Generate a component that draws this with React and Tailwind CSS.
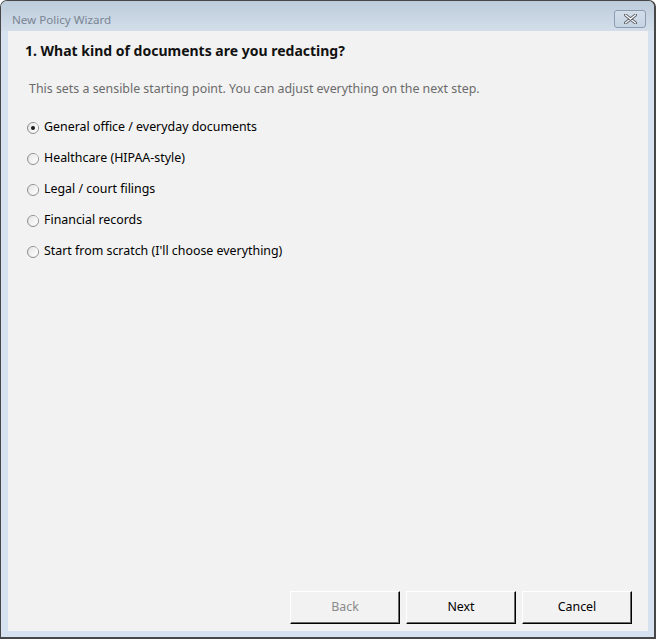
import React, { useState } from 'react';

const options = [
    'General office / everyday documents',
    'Healthcare (HIPAA-style)',
    'Legal / court filings',
    'Financial records',
    "Start from scratch (I'll choose everything)",
];

const Radio = ({ checked }) => (
    <span className="relative flex h-[12px] w-[12px] shrink-0 items-center justify-center rounded-full border border-[#8e8f8f] bg-gradient-to-br from-[#dcdcdc] to-white">
        <span className="h-[9px] w-[9px] rounded-full bg-gradient-to-br from-[#e6e6e6] to-white flex items-center justify-center">
            {checked && <span className="h-[4px] w-[4px] rounded-full bg-[#1a1a1a]"></span>}
        </span>
    </span>
);

const WinButton = ({ children, disabled, onClick }) => (
    <button
        onClick={onClick}
        className={`h-[33px] w-[110px] border border-t-white border-l-white border-r-black border-b-black bg-[#f2f2f2] shadow-[inset_-1px_-1px_0_#6b6b6b] text-[12.4px] ${disabled ? 'text-[#8a8a8a]' : 'text-black'}`}
    >
        {children}
    </button>
);

const App = () => {
    const [selected, setSelected] = useState(0);

    return (
        <div className="h-[639px] w-[656px] font-['Noto_Sans',sans-serif]">
            <div className="flex h-full w-full flex-col rounded-t-[7px] border-t border-l border-r-2 border-b-2 border-[#474747] bg-[#d6e2f0]">
                {/* title bar */}
                <div className="flex h-[30px] items-center justify-between rounded-t-[6px] bg-gradient-to-b from-[#bccbdb] to-[#d3deea] pl-[11px] pr-[8px] pt-[8px]">
                    <span className="text-[11.6px] text-[#7a8593]">New Policy Wizard</span>
                    <button className="flex h-[18px] w-[32px] items-center justify-center rounded-[3px] border border-[#8c9cb0] bg-gradient-to-b from-[#d3deea] to-[#c5d3e2] mt-[-2px]">
                        <svg width="13" height="10" viewBox="0 0 13 10">
                            <path d="M1.5 1 L11.5 9 M11.5 1 L1.5 9" stroke="#5a5f66" strokeWidth="3" strokeLinecap="round" />
                            <path d="M1.5 1 L11.5 9 M11.5 1 L1.5 9" stroke="#ffffff" strokeWidth="1.2" strokeLinecap="round" />
                        </svg>
                    </button>
                </div>

                {/* client area */}
                <div className="mb-[6px] ml-[7px] mr-[6px] flex flex-1 flex-col bg-[#f2f2f2]">
                    <div className="pl-[17px] pt-[10px]">
                        <h1 className="text-[14px] font-bold leading-[20px] text-[#111]">
                            1. What kind of documents are you redacting?
                        </h1>
                        <p className="mt-[19px] pl-[4px] text-[12.4px] leading-[18px] text-[#6b6b6b]">
                            This sets a sensible starting point. You can adjust everything on the next step.
                        </p>
                        <div className="mt-[14px] flex flex-col">
                            {options.map((opt, i) => (
                                <label
                                    key={opt}
                                    onClick={() => setSelected(i)}
                                    className="flex h-[31px] cursor-default items-center gap-[5px] pl-[2px]"
                                >
                                    <Radio checked={selected === i} />
                                    <span className="text-[12.4px] text-black">{opt}</span>
                                </label>
                            ))}
                        </div>
                    </div>

                    <div className="flex-1"></div>

                    <div className="flex justify-end gap-[6px] pb-[7px] pr-[16px]">
                        <WinButton disabled>Back</WinButton>
                        <WinButton>Next</WinButton>
                        <WinButton>Cancel</WinButton>
                    </div>
                </div>
            </div>
        </div>
    );
};

export default App;
